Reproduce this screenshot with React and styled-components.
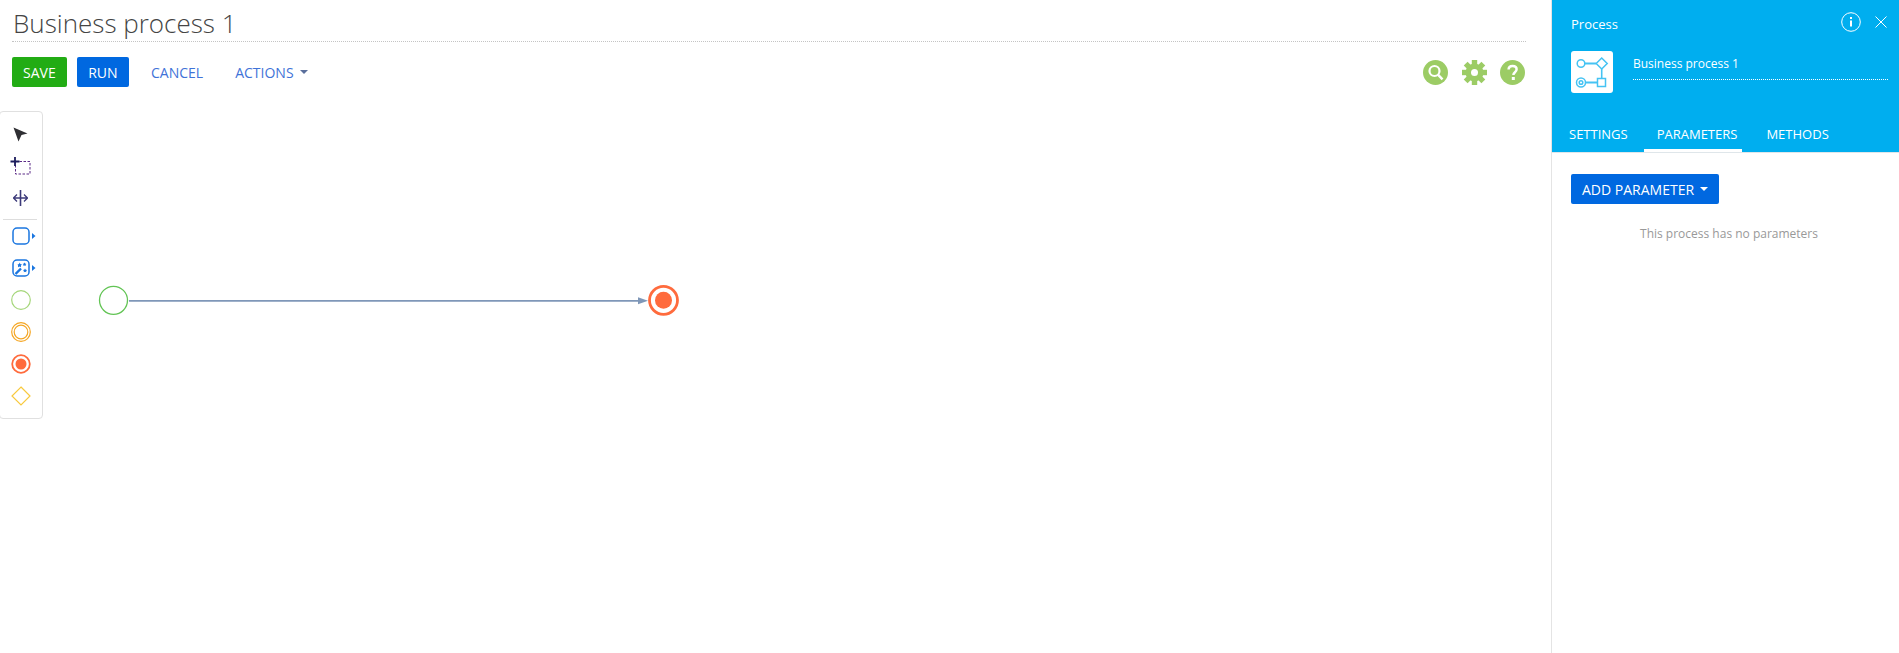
import React from "react";
import styled, { createGlobalStyle } from "styled-components";

const GlobalStyle = createGlobalStyle`
  html, body { margin: 0; padding: 0; background: #fff; }
  body { font-family: "Open Sans", "Liberation Sans", sans-serif; overflow: hidden; }
`;

const Page = styled.div`
  display: flex;
  height: 100vh;
`;

const Main = styled.div`
  width: 1551px;
  flex: none;
  display: flex;
  flex-direction: column;
`;

const TitleRow = styled.div`
  margin: 0 25px 0 12px;
  height: 41px;
  border-bottom: 1px dotted #c4c4c4;
`;

const Title = styled.h1`
  margin: 0;
  padding: 5px 0 0 1px;
  font-size: 26px;
  line-height: 36px;
  font-weight: 300;
  color: #444;
`;

const Toolbar = styled.div`
  display: flex;
  align-items: center;
  height: 30px;
  margin: 15px 26px 0 12px;
`;

const Button = styled.button`
  height: 30px;
  padding: 0 ${(p) => p.$pad || 11}px;
  margin-right: ${(p) => p.$gap || 0}px;
  border: 0;
  border-radius: 2px;
  background: ${(p) => p.$bg};
  color: #fff;
  font: 14px "Open Sans", sans-serif;
  display: ${(p) => (p.$inline ? "inline-flex" : "flex")};
  align-items: center;
  gap: 6px;
`;

const LinkButton = styled.span`
  margin-left: ${(p) => p.$left}px;
  color: #3f73d8;
  font-size: 14px;
  display: flex;
  align-items: center;
  gap: 6px;
`;

const Caret = styled.i`
  width: 0;
  height: 0;
  border-left: 4px solid transparent;
  border-right: 4px solid transparent;
  border-top: 4px solid ${(p) => p.$color};
`;

const ToolIcons = styled.div`
  margin-left: auto;
  display: flex;
  gap: 13.5px;
`;

const Canvas = styled.div`
  display: flex;
  align-items: flex-start;
  margin-top: 24px;
`;

const Palette = styled.div`
  width: 44px;
  flex: none;
  box-sizing: border-box;
  margin-left: -1px;
  padding: 6px 1px 6px 0;
  border: 1px solid #e0e0e0;
  border-radius: 4px;
  background: #fff;
  display: flex;
  flex-direction: column;
`;

const PaletteItem = styled.div`
  height: 32px;
  display: flex;
  align-items: center;
  justify-content: center;
`;

const PaletteDivider = styled.div`
  height: 1px;
  margin: 5px 4px 0 3px;
  background: #ddd;
`;

const PaletteSvg = styled.svg`
  margin-left: 8px;
`;

const Diagram = styled.svg`
  flex: none;
`;

const Panel = styled.aside`
  flex: 1;
  border-left: 1px solid #e4e4e4;
  display: flex;
  flex-direction: column;
`;

const PanelHead = styled.header`
  background: #00aeef;
  height: 152px;
  color: #fff;
  display: flex;
  flex-direction: column;
  border-bottom: 1px solid #dfe6ea;
`;

const HeadTop = styled.div`
  display: flex;
  align-items: center;
  justify-content: space-between;
  height: 44px;
  padding: 0 12px 0 19px;
  box-sizing: border-box;
`;

const HeadCaption = styled.span`
  margin-top: 4px;
  font-size: 13px;
`;

const HeadActions = styled.div`
  display: flex;
  align-items: center;
  gap: 14px;
`;

const NameRow = styled.div`
  display: flex;
  padding: 7px 11px 0 19px;
`;

const Tile = styled.div`
  width: 42px;
  height: 42px;
  background: #fff;
  border-radius: 3px;
  display: flex;
  flex: none;
`;

const NameField = styled.div`
  flex: 1;
  margin-left: 20px;
  height: 28px;
  border-bottom: 1px dotted #fff;
  font-size: 12px;
  line-height: 26px;
`;

const Tabs = styled.nav`
  display: flex;
  margin-top: auto;
  padding-left: 4px;
  gap: 11px;
`;

const Tab = styled.div`
  height: 38px;
  box-sizing: border-box;
  padding: 10px 5px 0 13px;
  font-size: 13px;
  line-height: 20px;
  border-bottom: 3px solid ${(p) => (p.$active ? "#fff" : "transparent")};
`;

const PanelBody = styled.div`
  padding: 21px 0 0 19px;
`;

const EmptyNote = styled.p`
  margin: 22px 0 0 -12px;
  text-align: center;
  font-size: 12px;
  line-height: 16px;
  color: #999;
`;

const SearchIcon = () => (
  <svg width="25" height="25" viewBox="0 0 25 25">
    <circle cx="12.5" cy="12.5" r="12.5" fill="#9ccc65" />
    <circle cx="11.5" cy="11" r="5" fill="none" stroke="#fff" strokeWidth="2.2" />
    <path d="M15.2 14.8l4.3 4.5" stroke="#fff" strokeWidth="2.4" />
  </svg>
);

const GearIcon = () => (
  <svg width="25" height="25" viewBox="0 0 25 25">
    <g fill="#9ccc65">
      <circle cx="12.5" cy="12.5" r="9" />
      {[0, 45, 90, 135, 180, 225, 270, 315].map((a) => (
        <rect key={a} x="9.8" y="0" width="5.4" height="6" transform={`rotate(${a} 12.5 12.5)`} />
      ))}
    </g>
    <circle cx="12.5" cy="12.5" r="3.5" fill="#fff" />
  </svg>
);

const HelpIcon = () => (
  <svg width="25" height="25" viewBox="0 0 25 25">
    <circle cx="12.5" cy="12.5" r="12.5" fill="#9ccc65" />
    <path d="M8.6 9.6c0-2.4 1.7-3.7 4-3.7s4 1.3 4 3.4c0 3-3.2 2.8-3.2 5.6" fill="none" stroke="#fff" strokeWidth="2.5" />
    <rect x="11.8" y="17" width="3" height="3" fill="#fff" />
  </svg>
);

const PointerIcon = () => (
  <svg width="15" height="15" viewBox="0 0 15 15">
    <path d="M0.5 0.5L14.500 6.500 8.500 8 5.500 14.500z" fill="#2f2f33" />
  </svg>
);

const MarqueeIcon = () => (
  <svg width="22" height="18" viewBox="0 0 22 18" fill="none">
    <path d="M5.500 4.500h14.500v12.500H5.500z" stroke="#5b2a86" strokeDasharray="2.500 1.500" />
    <path d="M5 0v9M0.500 4.500h9" stroke="#1c1c5c" strokeWidth="1.800" />
  </svg>
);

const SplitIcon = () => (
  <svg width="15" height="16" viewBox="0 0 15 16" fill="none" stroke="#3c3a7a">
    <path d="M7.500 0v16" strokeWidth="1.600" />
    <path d="M0.500 8h14M4 4.500L0.500 8 4 11.500M11 4.500L14.500 8 11 11.500" strokeWidth="1.300" />
  </svg>
);

const TaskIcon = () => (
  <PaletteSvg width="26" height="18" viewBox="0 0 26 18" fill="none">
    <rect x="1" y="1" width="16" height="16" rx="4" stroke="#1a76e0" strokeWidth="1.500" />
    <path d="M20 6l3.500 3-3.500 3z" fill="#1a76e0" />
  </PaletteSvg>
);

const WizardIcon = () => (
  <PaletteSvg width="26" height="18" viewBox="0 0 26 18" fill="none">
    <rect x="1" y="1" width="16" height="16" rx="4" stroke="#1a76e0" strokeWidth="1.500" />
    <path d="M3.500 15l5.500-5.500" stroke="#1a76e0" strokeWidth="2.400" />
    <path d="M7.500 3.500l.9 1.500 1.600.4-1.100 1.200.1 1.600-1.500-.6-1.500.6.100-1.600L5.500 5.400l1.600-.4zM12.500 3.500l.7 1.100 1.200.3-.8.9.1 1.200-1.200-.5-1.100.5.100-1.200-.8-.9 1.200-.3zM13 9.500l.8 1.200 1.300.3-.9 1 .1 1.300-1.300-.5-1.200.5.100-1.300-.9-1 1.300-.3z" fill="#1a76e0" />
    <path d="M20 6l3.500 3-3.500 3z" fill="#1a76e0" />
  </PaletteSvg>
);

const ShapeIcon = ({ children }) => (
  <svg width="22" height="22" viewBox="0 0 22 22" fill="none">
    {children}
  </svg>
);

const ProcessIcon = () => (
  <svg width="42" height="42" viewBox="0 0 42 42" fill="none" stroke="#45c3f3" strokeWidth="1.500">
    <circle cx="10" cy="12.500" r="3.800" />
    <path d="M14 12.500h11" strokeWidth="2" />
    <path d="M30.700 7l5.500 5.500-5.500 5.500-5.500-5.500z" />
    <path d="M30.700 18v9" strokeWidth="1.600" />
    <rect x="26.500" y="27.500" width="8" height="8" />
    <path d="M26 31.500H15" strokeWidth="2" />
    <circle cx="10" cy="31.500" r="4.500" />
    <circle cx="10" cy="31.500" r="1.800" />
  </svg>
);

export default function App() {
  return (
    <Page>
      <GlobalStyle />
      <Main>
        <TitleRow>
          <Title>Business process 1</Title>
        </TitleRow>
        <Toolbar>
          <Button $bg="#22ac14" $gap={10}>SAVE</Button>
          <Button $bg="#0068e0" $pad={11.5}>RUN</Button>
          <LinkButton $left={22}>CANCEL</LinkButton>
          <LinkButton $left={32}>
            ACTIONS <Caret $color="#5a6f9c" />
          </LinkButton>
          <ToolIcons>
            <SearchIcon />
            <GearIcon />
            <HelpIcon />
          </ToolIcons>
        </Toolbar>
        <Canvas>
          <Palette>
            <PaletteItem><PointerIcon /></PaletteItem>
            <PaletteItem><MarqueeIcon /></PaletteItem>
            <PaletteItem><SplitIcon /></PaletteItem>
            <PaletteDivider />
            <PaletteItem><TaskIcon /></PaletteItem>
            <PaletteItem><WizardIcon /></PaletteItem>
            <PaletteItem>
              <ShapeIcon><circle cx="11" cy="11" r="9.300" stroke="#a5d67a" strokeWidth="1.200" /></ShapeIcon>
            </PaletteItem>
            <PaletteItem>
              <ShapeIcon>
                <circle cx="11" cy="11" r="9.300" stroke="#f5a623" strokeWidth="1.200" />
                <circle cx="11" cy="11" r="6.800" stroke="#f5a623" strokeWidth="1.200" />
              </ShapeIcon>
            </PaletteItem>
            <PaletteItem>
              <ShapeIcon>
                <circle cx="11" cy="11" r="8.800" stroke="#ff6b3d" strokeWidth="1.800" />
                <circle cx="11" cy="11" r="5.500" fill="#ff6b3d" />
              </ShapeIcon>
            </PaletteItem>
            <PaletteItem>
              <ShapeIcon><path d="M11 2l9 9-9 9-9-9z" stroke="#f8c93e" strokeWidth="1.200" /></ShapeIcon>
            </PaletteItem>
          </Palette>
          <Diagram width="700" height="320" viewBox="43 111 700 320" fill="none">
            <circle cx="113.500" cy="300.300" r="14" stroke="#62c454" strokeWidth="1.300" />
            <path d="M129 300.800h512" stroke="#7f97b8" strokeWidth="1.800" />
            <path d="M638 297.300l10 3.500-10 3.500z" fill="#7f97b8" />
            <circle cx="663.500" cy="300.300" r="14" stroke="#ff6b3d" strokeWidth="2.800" />
            <circle cx="663.500" cy="300.300" r="8.500" fill="#ff6b3d" />
          </Diagram>
        </Canvas>
      </Main>
      <Panel>
        <PanelHead>
          <HeadTop>
            <HeadCaption>Process</HeadCaption>
            <HeadActions>
              <svg width="20" height="20" viewBox="0 0 20 20" fill="none" stroke="#fff">
                <circle cx="10" cy="10" r="9.300" />
                <path d="M10 8.500v6" strokeWidth="2" />
                <path d="M10 5v2" strokeWidth="2" />
              </svg>
              <svg width="12" height="12" viewBox="0 0 12 12" stroke="#fff" strokeWidth="1">
                <path d="M.5.500l11 11M11.500.500l-11 11" />
              </svg>
            </HeadActions>
          </HeadTop>
          <NameRow>
            <Tile><ProcessIcon /></Tile>
            <NameField>Business process 1</NameField>
          </NameRow>
          <Tabs>
            <Tab>SETTINGS</Tab>
            <Tab $active>PARAMETERS</Tab>
            <Tab>METHODS</Tab>
          </Tabs>
        </PanelHead>
        <PanelBody>
          <Button as="div" $bg="#0068e0" $inline>
            ADD PARAMETER <Caret $color="#fff" />
          </Button>
          <EmptyNote>This process has no parameters</EmptyNote>
        </PanelBody>
      </Panel>
    </Page>
  );
}
